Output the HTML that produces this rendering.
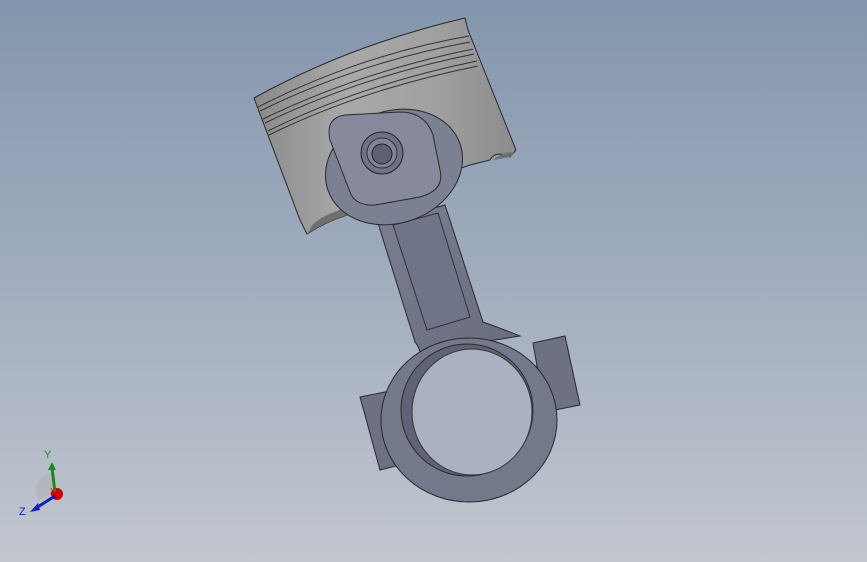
<!DOCTYPE html>
<html><head><meta charset="utf-8"><style>
html,body{margin:0;padding:0}
body{width:867px;height:562px;overflow:hidden;background:linear-gradient(#8496ad 0%,#9eabbd 45%,#c2c6cf 100%);font-family:"Liberation Sans",sans-serif}
</style></head><body>
<svg width="867" height="562" viewBox="0 0 867 562" xmlns="http://www.w3.org/2000/svg" style="display:block">
<defs>
<linearGradient id="pg" x1="0" y1="0" x2="1" y2="0">
<stop offset="0" stop-color="#8a8a8a"/><stop offset="0.35" stop-color="#a9a9a9"/><stop offset="0.7" stop-color="#a0a0a0"/><stop offset="1" stop-color="#8c8c8c"/></linearGradient>
<linearGradient id="rg" x1="0" y1="0" x2="1" y2="1">
<stop offset="0" stop-color="#7a7e91"/><stop offset="1" stop-color="#686c7e"/></linearGradient>
</defs>
<!-- piston -->
<path d="M254 98 Q350 45 465 18 L468 30 L516 150 L510 157 Q495 150 490 160 L470 165 L350 205 L347 215 Q325 222 307 234 L300 220 Z" fill="url(#pg)" stroke="#2a2a2a" stroke-width="1"/>
<g fill="none" stroke="#333" stroke-width="1">
<path d="M258 107 Q360 55 469 36"/><path d="M260 111 Q360 62 470 42"/>
<path d="M263 119 Q360 72 473 49"/><path d="M265 123 Q360 77 474 54"/>
<path d="M268 131 Q360 85 477 61"/><path d="M269 135 Q360 90 478 66"/>
</g>
<path d="M313 224 Q330 210 360 205 L347 215 Q325 222 307 234 Z" fill="#6f6f6f"/>
<path d="M493 160 Q505 150 515 153 L510 157 Z" fill="#6f6f6f"/>
<!-- beam -->
<path d="M378 223 L445 205 L483 322 Q500 328 520 336 L420 352 Q418 345 415 342 Z" fill="url(#rg)" stroke="#2a2a2a"/>
<path d="M393 225 L438 213 L470 317 L427 330 Z" fill="#70748a" stroke="#333"/>
<!-- small end -->
<ellipse cx="394" cy="167" rx="70" ry="56" fill="#7c8093" stroke="#2a2a2a" stroke-width="1" transform="rotate(-20 394 167)"/>
<path d="M330 140 Q325 118 345 115 L400 112 Q425 112 433 135 L440 170 Q445 190 420 197 L375 205 Q355 206 350 192 Z" fill="#878a9c" stroke="#2a2a2a" stroke-width="1"/>
<circle cx="382" cy="153" r="21" fill="#6e7284" stroke="#222"/>
<circle cx="382" cy="153" r="15" fill="#80849a" stroke="#333"/>
<circle cx="382" cy="154" r="10" fill="#5d6173" stroke="#222"/>
<!-- bolt bosses -->
<path d="M360 397 L395 390 L400 465 L380 470 Z" fill="#6d7183" stroke="#2a2a2a"/>
<path d="M533 343 L565 336 L580 405 L545 412 Z" fill="#6d7183" stroke="#2a2a2a"/>
<!-- big end -->
<ellipse cx="469" cy="420" rx="88" ry="82" fill="#74788b" stroke="#2a2a2a"/>
<ellipse cx="467" cy="410" rx="66" ry="66" fill="#5f6375" stroke="#2a2a2a"/>
<ellipse cx="472" cy="412" rx="60" ry="63" fill="#aab2c1" stroke="#333"/>
<!-- triad -->
<path d="M38 500 A18 18 0 0 1 52 473 L55 493 Z" fill="#b4b4b8" opacity="0.8"/>
<circle cx="57" cy="494" r="6" fill="#c00"/>
<line x1="55" y1="492" x2="52" y2="468" stroke="#1a8a1a" stroke-width="3"/>
<path d="M48 470 L52 462 L56 470 Z" fill="#1a8a1a"/>
<line x1="55" y1="496" x2="36" y2="508" stroke="#1020b0" stroke-width="3"/>
<path d="M30 512 L38 503 L40 510 Z" fill="#1020b0"/>
<text x="44" y="458" font-size="11" fill="#1a9a1a" font-family="Liberation Sans">Y</text>
<text x="19" y="515" font-size="11" fill="#1020d0" font-family="Liberation Sans">Z</text>
<text x="50" y="494" font-size="8" fill="#e00" font-family="Liberation Sans">X</text>
</svg>
</body></html>
